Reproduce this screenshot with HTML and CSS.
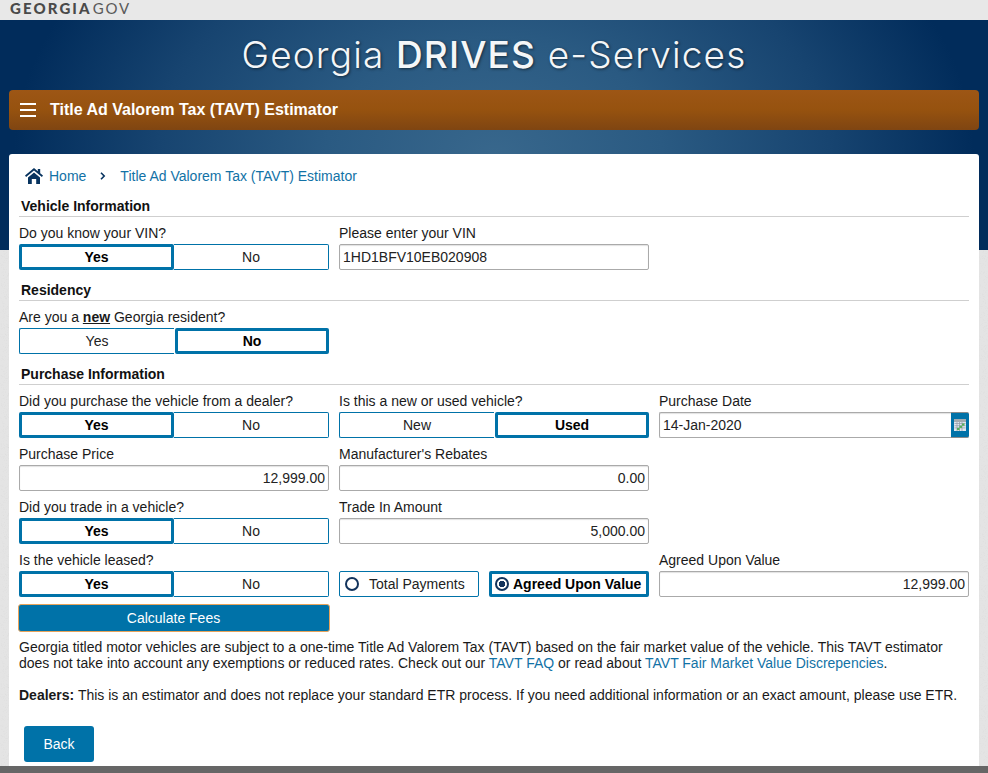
FILE: index.html
```html
<!DOCTYPE html>
<html>
  <head>
    <title>Title Ad Valorem Tax (TAVT) Estimator</title>
    <link rel="stylesheet" href="styles.css">
  </head>
  <body>
    <!-- state banner -->
    <div class="gov-bar"><b>GEORGIA</b><span>GOV</span></div>

    <div class="page">
      <div class="site-title">Georgia <b>DRIVES</b> e-Services</div>

      <div class="nav-bar">
        <div class="hamburger"><i></i><i></i><i></i></div>
        <h1>Title Ad Valorem Tax (TAVT) Estimator</h1>
      </div>

      <div class="card">
        <div class="breadcrumb">
          <svg class="home-icon" viewBox="0 0 18 16" width="18" height="16">
            <path d="M9 0 0 7.6l1.1 1.5L9 2.5l7.9 6.6L18 7.6l-2.8-2.4V1h-2.4v2.2z" fill="#07335f"/>
            <path d="M3 9.6 9 4.6l6 5V16h-3.8v-5H6.8v5H3z" fill="#07335f"/>
          </svg>
          <a href="#" class="crumb-home">Home</a>
          <svg class="crumb-sep" viewBox="0 0 6 8" width="6" height="8">
            <path d="M1 .8 4.2 4 1 7.2" fill="none" stroke="#07335f" stroke-width="1.6"/>
          </svg>
          <a href="#">Title Ad Valorem Tax (TAVT) Estimator</a>
        </div>

        <h2>Vehicle Information</h2>
        <div class="form-grid">
          <div class="field">
            <label>Do you know your VIN?</label>
            <div class="toggle"><button class="on">Yes</button><button>No</button></div>
          </div>
          <div class="field">
            <label>Please enter your VIN</label>
            <input type="text" value="1HD1BFV10EB020908">
          </div>
        </div>

        <h2>Residency</h2>
        <div class="form-grid">
          <div class="field">
            <label>Are you a <b class="new">new</b> Georgia resident?</label>
            <div class="toggle"><button>Yes</button><button class="on">No</button></div>
          </div>
        </div>

        <h2>Purchase Information</h2>
        <div class="form-grid">
          <div class="field">
            <label>Did you purchase the vehicle from a dealer?</label>
            <div class="toggle"><button class="on">Yes</button><button>No</button></div>
          </div>
          <div class="field">
            <label>Is this a new or used vehicle?</label>
            <div class="toggle"><button>New</button><button class="on">Used</button></div>
          </div>
          <div class="field">
            <label>Purchase Date</label>
            <div class="date-wrap">
              <input type="text" value="14-Jan-2020">
              <span class="cal-btn">
                <svg viewBox="0 0 12 12" width="12" height="12">
                  <rect width="12" height="12" fill="#dfe6ee"/>
                  <rect width="12" height="3" fill="#a3abb0"/>
                  <path d="M.5 4.5h11M.5 6.7h11M.5 8.9h11M3 3v9M5.5 3v9M8 3v9" stroke="#8f9aa6" stroke-width=".7"/>
                  <rect x="5.5" y="6.7" width="2.5" height="2.2" fill="#58b05a"/>
                  <rect x="8" y="4.5" width="2.5" height="2.2" fill="#58b05a"/>
                  <rect x="3" y="8.9" width="2.5" height="2.2" fill="#58b05a"/>
                </svg>
              </span>
            </div>
          </div>

          <div class="field">
            <label>Purchase Price</label>
            <input type="text" class="num" value="12,999.00">
          </div>
          <div class="field">
            <label>Manufacturer's Rebates</label>
            <input type="text" class="num" value="0.00">
          </div>
          <div></div>

          <div class="field">
            <label>Did you trade in a vehicle?</label>
            <div class="toggle"><button class="on">Yes</button><button>No</button></div>
          </div>
          <div class="field">
            <label>Trade In Amount</label>
            <input type="text" class="num" value="5,000.00">
          </div>
          <div></div>

          <div class="field">
            <label>Is the vehicle leased?</label>
            <div class="toggle"><button class="on">Yes</button><button>No</button></div>
          </div>
          <div class="field">
            <label>&nbsp;</label>
            <div class="radio-row">
              <div class="radio"><i class="dot"></i>Total Payments</div>
              <div class="radio on"><i class="dot"></i>Agreed Upon Value</div>
            </div>
          </div>
          <div class="field">
            <label>Agreed Upon Value</label>
            <input type="text" class="num" value="12,999.00">
          </div>

          <button class="calc">Calculate Fees</button>
        </div>

        <p class="note">Georgia titled motor vehicles are subject to a one-time Title Ad Valorem Tax (TAVT) based on the fair market value of the vehicle. This TAVT estimator does not take into account any exemptions or reduced rates. Check out our <a href="#">TAVT FAQ</a> or read about <a href="#">TAVT Fair Market Value Discrepencies</a>.</p>
        <p class="note dealers"><b>Dealers:</b> This is an estimator and does not replace your standard ETR process. If you need additional information or an exact amount, please use ETR.</p>

        <a href="#" class="back">Back</a>
      </div>
    </div>

    <div class="footer-bar"></div>
  </body>
</html>
```

FILE: styles.css
```css
html, body {
  margin: 0;
  overflow: hidden;
}

body {
  font-family: "Liberation Sans", Arial, sans-serif;
  font-size: 14px;
  color: #1a1a1a;
  background: #e4e4e4;
}

a {
  color: #1272a6;
  text-decoration: none;
}

.gov-bar {
  height: 20px;
  padding-left: 10px;
  background: #e8e8e8;
  color: #4a4a4a;
  font-family: "Lato", sans-serif;
  font-size: 15px;
  line-height: 17px;
  letter-spacing: 2.1px;
}

.gov-bar b {
  font-weight: 900;
}

.gov-bar span {
  margin-left: 1px;
  color: #5a5a5a;
  letter-spacing: 1.8px;
}

/* blue banner sits behind the top of the card, speckled grey below it */
.page {
  height: 746px;
  padding: 0 9px;
  box-sizing: border-box;
  background-color: #e4e4e4;
  background-image:
    radial-gradient(ellipse 480px 330px at 494px 135px, #38678c 0%, #2a5a82 35%, #174470 70%, #012c5b 100%),
    url("data:image/svg+xml,%3Csvg xmlns='http://www.w3.org/2000/svg' width='120' height='120'%3E%3Cfilter id='n'%3E%3CfeTurbulence baseFrequency='.9' numOctaves='2' stitchTiles='stitch'/%3E%3CfeColorMatrix values='0 0 0 0 .5 0 0 0 0 .5 0 0 0 0 .5 .3 0 0 0 -.08'/%3E%3C/filter%3E%3Crect width='120' height='120' filter='url(%23n)'/%3E%3C/svg%3E");
  background-size: 100% 230px, 120px 120px;
  background-repeat: no-repeat, repeat;
}

.site-title {
  height: 70px;
  color: #f4f6f8;
  font-family: "Inter", sans-serif;
  font-size: 37px;
  font-weight: 300;
  line-height: 70px;
  text-align: center;
  letter-spacing: 1.15px;
  text-shadow: 1px 1px 3px rgba(0, 0, 0, 0.55);
}

.site-title b {
  font-weight: 500;
}

.nav-bar {
  display: flex;
  align-items: center;
  height: 40px;
  margin-bottom: 24px;
  padding-left: 11px;
  border-radius: 4px;
  background: linear-gradient(#9d5615 0%, #96520f 50%, #7f4512 100%);
}

.hamburger {
  display: flex;
  flex-direction: column;
  gap: 4px;
  width: 16px;
  margin-right: 14px;
}

.hamburger i {
  display: block;
  height: 2px;
  background: #fff;
}

.nav-bar h1 {
  margin: 0;
  color: #fff;
  font-size: 16px;
  font-weight: bold;
}

.card {
  height: 612px;
  padding: 0 10px;
  box-sizing: border-box;
  border-radius: 3px 3px 0 0;
  background: #fff;
}

.breadcrumb {
  display: flex;
  align-items: center;
  height: 20px;
  padding: 12px 0 0 6px;
}

.home-icon {
  margin-right: 6px;
}

.crumb-sep {
  margin: 0 14px 0 14px;
}

h2 {
  height: 20px;
  margin: 0 0 7px;
  padding: 10px 0 0 2px;
  border-bottom: 1px solid #cfcfcf;
  color: #111;
  font-size: 14px;
  font-weight: bold;
  line-height: 20px;
}

.form-grid {
  display: grid;
  grid-template-columns: repeat(3, 310px);
  column-gap: 10px;
  row-gap: 7px;
}

.field label {
  display: block;
  height: 20px;
  line-height: 18px;
}

.new {
  text-decoration: underline;
}

.toggle {
  display: grid;
  grid-template-columns: 155px 155px;
  height: 26px;
}

.toggle button {
  padding: 0;
  border: 1px solid #0072a8;
  border-left-width: 0;
  border-radius: 0 2px 2px 0;
  background: #fff;
  color: #222;
  font-family: inherit;
  font-size: 14px;
}

.toggle button:first-child {
  border-left-width: 1px;
  border-right-width: 0;
  border-radius: 2px 0 0 2px;
}

.toggle button.on {
  border: 3px solid #0072a8;
  border-radius: 2px;
  color: #000;
  font-weight: bold;
}

.toggle button:last-child.on {
  margin-left: 1px;
}

input {
  display: block;
  width: 100%;
  height: 26px;
  padding: 0 3px;
  box-sizing: border-box;
  border: 1px solid #aaa;
  border-radius: 2px;
  box-shadow: inset 0 1px 1px rgba(0, 0, 0, 0.12);
  color: #222;
  font-family: inherit;
  font-size: 14px;
}

input.num {
  text-align: right;
}

.date-wrap {
  display: flex;
}

.date-wrap input {
  border-right: 0;
  border-radius: 2px 0 0 2px;
}

.cal-btn {
  display: flex;
  flex: none;
  align-items: center;
  justify-content: center;
  width: 18px;
  box-sizing: border-box;
  border: solid #8a8a8a;
  border-width: 1px 0;
  border-radius: 0 2px 2px 0;
  background: #0072a8;
}

.radio-row {
  display: grid;
  grid-template-columns: 140px 160px;
  column-gap: 10px;
  height: 26px;
}

.radio {
  display: flex;
  align-items: center;
  padding-left: 5px;
  border: 1px solid #0072a8;
  border-radius: 2px;
  color: #222;
}

.dot {
  width: 10px;
  height: 10px;
  margin-right: 10px;
  border: 2px solid #12335c;
  border-radius: 50%;
}

.radio.on {
  padding-left: 3px;
  border-width: 3px;
  color: #000;
  font-weight: bold;
}

.radio.on .dot {
  margin-right: 4px;
  background: radial-gradient(circle, #12335c 0 3px, #fff 3.5px);
}

.calc {
  grid-column: 1;
  height: 28px;
  margin: 0 -1px;
  padding: 0 7px 0 6px;
  border: 1px solid #e8a35a;
  border-radius: 3px;
  background: #0072a8;
  color: #fff;
  font-family: inherit;
  font-size: 14px;
}

.note {
  margin: 7px 0 0;
  line-height: 16px;
}

.note.dealers {
  margin-top: 16px;
}

.back {
  display: block;
  width: 70px;
  height: 36px;
  margin: 23px 0 0 5px;
  border-radius: 3px;
  background: #0072a8;
  color: #fff;
  line-height: 36px;
  text-align: center;
}

.footer-bar {
  height: 7px;
  background: #666;
}
```
